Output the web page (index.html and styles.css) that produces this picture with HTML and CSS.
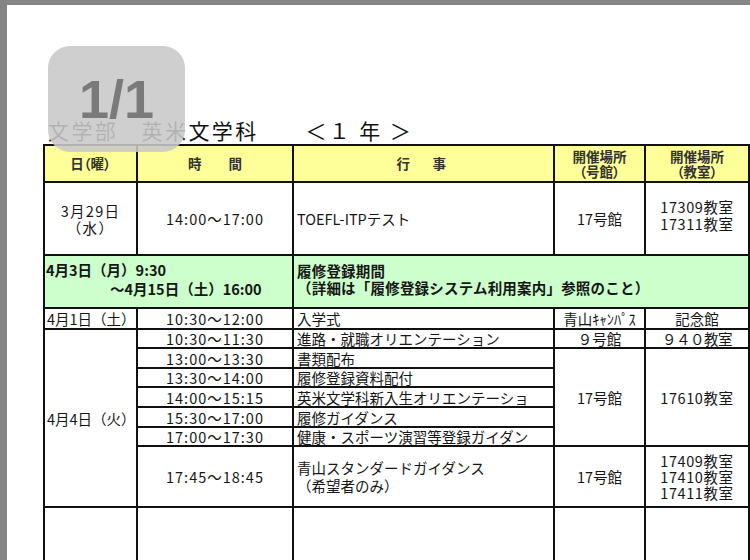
FILE: index.html
```html
<!DOCTYPE html>
<html lang="ja">
<head>
<meta charset="utf-8">
<title>英米文学科 1年</title>
<link rel="stylesheet" href="styles.css">
</head>
<body>
<div class="page">
  <div class="title">文学部　英米文学科　　＜１ 年 ＞</div>
  <table class="sched">
    <colgroup>
      <col class="c1"><col class="c2"><col class="c3"><col class="c4"><col class="c5"><col class="c6">
    </colgroup>
    <tr class="r-head">
      <td class="hd"><span class="pk">日（曜）</span></td>
      <td class="hd">時　　間</td>
      <td class="hd sp">行　事</td>
      <td class="hd">開催場所<br><span class="pk">（号館）</span></td>
      <td class="hd">開催場所<br><span class="pk">（教室）</span></td>
      <td class="hd"></td>
    </tr>
    <tr class="r-329">
      <td class="ctr date">3月29日<br>（水）</td>
      <td class="ctr time">14:00～17:00</td>
      <td class="ev">TOEFL-ITPテスト</td>
      <td class="ctr">17号館</td>
      <td class="ctr num up">17309教室<br>17311教室</td>
      <td></td>
    </tr>
    <tr class="r-green">
      <td colspan="2" class="green gl">4月3日（月）9:30<br><span class="indent">～4月15日（土）16:00</span></td>
      <td colspan="3" class="green gr">履修登録期間<br>（詳細は「履修登録システム利用案内」参照のこと）</td>
      <td></td>
    </tr>
    <tr class="r0">
      <td class="left">4月1日（土）</td>
      <td class="ctr time">10:30～12:00</td>
      <td class="ev">入学式</td>
      <td class="ctr">青山ｷｬﾝﾊﾟｽ</td>
      <td class="ctr">記念館</td>
      <td></td>
    </tr>
    <tr class="r2">
      <td rowspan="7" class="left">4月4日（火）</td>
      <td class="ctr time">10:30～11:30</td>
      <td class="ev">進路・就職オリエンテーション</td>
      <td class="ctr">９号館</td>
      <td class="ctr fw">９４０教室</td>
      <td></td>
    </tr>
    <tr class="r1">
      <td class="ctr time">13:00～13:30</td>
      <td class="ev">書類配布</td>
      <td rowspan="5" class="ctr">17号館</td>
      <td rowspan="5" class="ctr num">17610教室</td>
      <td rowspan="5"></td>
    </tr>
    <tr class="r2">
      <td class="ctr time">13:30～14:00</td>
      <td class="ev">履修登録資料配付</td>
    </tr>
    <tr class="r1">
      <td class="ctr time">14:00～15:15</td>
      <td class="ev">英米文学科新入生オリエンテーショ</td>
    </tr>
    <tr class="r1">
      <td class="ctr time">15:30～17:00</td>
      <td class="ev">履修ガイダンス</td>
    </tr>
    <tr class="r2">
      <td class="ctr time">17:00～17:30</td>
      <td class="ev">健康・スポーツ演習等登録ガイダン</td>
    </tr>
    <tr class="r-last">
      <td class="ctr time">17:45～18:45</td>
      <td class="ev multi">青山スタンダードガイダンス<br>（希望者のみ）</td>
      <td class="ctr">17号館</td>
      <td class="ctr num rooms">17409教室<br>17410教室<br>17411教室</td>
      <td></td>
    </tr>
    <tr class="r-empty">
      <td></td><td></td><td></td><td></td><td></td><td></td>
    </tr>
  </table>
  <div class="badge">1/1</div>
</div>
</body>
</html>
```

FILE: styles.css
```css
html, body {
  margin: 0;
  padding: 0;
  height: 100%;
}

body {
  background: #858585;
  overflow: hidden;
  font-family: "Noto Sans CJK JP", "Noto Sans", sans-serif;
  color: #161616;
}

.page {
  position: relative;
  margin: 5px 0 0 7px;
  height: 555px;
  background: #ffffff;
  overflow: hidden;
  padding-top: 113px;
  box-sizing: border-box;
}

.title {
  margin-left: 41px;
  height: 24px;
  font-size: 21px;
  line-height: 24px;
  letter-spacing: 2.4px;
  white-space: pre;
  color: #111;
}

.sched {
  margin: 2px 0 0 36px;
  border-collapse: collapse;
  table-layout: fixed;
  width: 805px;
}

.c1 { width: 93px; }
.c2 { width: 156px; }
.c3 { width: 261px; }
.c4 { width: 91px; }
.c5 { width: 104px; }
.c6 { width: 100px; }

.sched td {
  border: 2px solid #111;
  padding: 0 2px;
  font-size: 14.5px;
  line-height: 17px;
  white-space: nowrap;
  overflow: hidden;
  vertical-align: middle;
}

.sched td.hd {
  background: #ffff99;
  text-align: center;
  font-weight: 700;
  font-size: 13.5px;
  line-height: 15px;
  color: #333;
}

.pk {
  font-feature-settings: "palt" 1;
}

.sched td.sp {
  letter-spacing: 4.5px;
}

.r-head { height: 37px; }
.r-329 { height: 73px; }
.r-green { height: 53px; }
.r0 { height: 21px; }
.r1 { height: 20px; }
.r2 { height: 19px; }
.r-last { height: 61px; }
.r-empty { height: 80px; }

.ctr { text-align: center; }
.left { text-align: left; padding-left: 1px; }

.sched td.time { letter-spacing: 1px; }
.sched td.date { letter-spacing: 1.3px; line-height: 17px; }
.sched td.num { letter-spacing: 0.6px; }
.sched td.up { padding-bottom: 8px; }
.sched td.fw { letter-spacing: -0.5px; }
.sched td.rooms { line-height: 16px; }

.sched td.ev {
  text-align: left;
  padding-left: 3px;
}

.sched td.multi { line-height: 18px; }

.sched td.green {
  background: #ccffcc;
  font-weight: 700;
  text-align: left;
  padding-bottom: 6px;
}

.sched td.gl {
  padding-left: 1px;
  line-height: 19px;
}

.sched td.gr {
  padding-left: 3px;
  line-height: 17px;
  letter-spacing: 0.2px;
}

.indent {
  padding-left: 64px;
}

.badge {
  position: absolute;
  left: 41px;
  top: 41px;
  width: 137px;
  height: 106px;
  border-radius: 22px;
  background: rgba(200, 200, 200, 0.88);
  display: flex;
  align-items: center;
  justify-content: center;
  font-family: "Liberation Sans", Arial, sans-serif;
  font-weight: 700;
  font-size: 54px;
  color: #7a7a7a;
}
```
